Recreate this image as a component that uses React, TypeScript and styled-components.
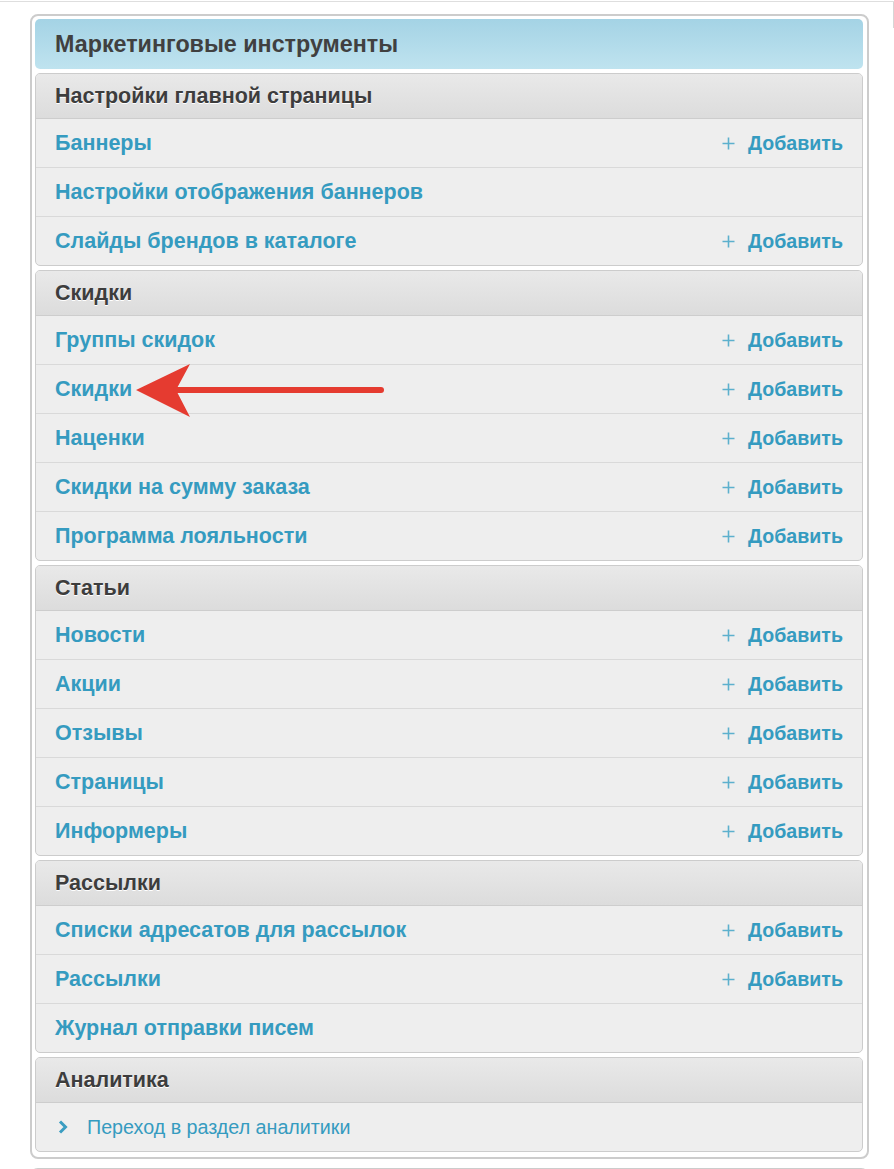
import React from "react";
import styled, { createGlobalStyle } from "styled-components";

const Global = createGlobalStyle`
  html, body { margin: 0; padding: 0; background: #ffffff; }
  body { font-family: "Liberation Sans", Arial, sans-serif; }
  * { box-sizing: border-box; }
`;

const Page = styled.div`
  position: relative;
  width: 894px;
  min-height: 1169px;
  padding-top: 12px;
  border-top: 1px solid #dedede;
  margin-top: 1px;
  overflow: hidden;
`;

const EdgeMark = styled.div`
  position: absolute;
  top: 0;
  right: 0;
  width: 1px;
  height: 26px;
  background: #d6d6d6;
`;

const Outer = styled.div`
  margin-left: 30px;
  width: 839px;
  border: 2px solid #cccccc;
  border-radius: 8px;
  padding: 3px 4px 5px 3px;
  background: #ffffff;
`;

const Title = styled.div`
  height: 50px;
  border-radius: 5px;
  background: linear-gradient(#a4d3e5, #bfe3ef);
  display: flex;
  align-items: center;
  padding-left: 20px;
  font-size: 23.3px;
  font-weight: bold;
  color: #404040;
`;

const Block = styled.div`
  position: relative;
  margin-top: 4px;
  border: 1px solid #cccccc;
  border-radius: 5px;
  background: #eeeeee;
  overflow: hidden;
`;

const BlockHeader = styled.div`
  height: 45px;
  display: flex;
  align-items: center;
  padding-left: 19px;
  background: linear-gradient(#e9e9e9, #dcdcdc);
  border-bottom: 1px solid #cdcdcd;
  font-size: 21.5px;
  font-weight: bold;
  color: #3d3d3d;
  text-shadow: 0 1px 0 #ffffff;
`;

const Row = styled.div<{ $first?: boolean }>`
  height: ${(p) => (p.$first ? "48px" : "49px")};
  display: flex;
  align-items: center;
  justify-content: space-between;
  padding: 0 19px;
  border-top: ${(p) => (p.$first ? "none" : "1px solid #d9d9d9")};
`;

const ItemLink = styled.a`
  font-size: 21.5px;
  font-weight: bold;
  color: #359bc0;
  text-decoration: none;
`;

const AddLink = styled.a`
  display: flex;
  align-items: center;
  gap: 13px;
  font-size: 19.6px;
  font-weight: bold;
  color: #359bc0;
  text-decoration: none;
`;

const PlainRow = styled.div`
  height: 48px;
  display: flex;
  align-items: center;
  padding-left: 22px;
  gap: 19px;
  font-size: 19.7px;
  color: #359bc0;
`;

const ArrowOverlay = styled.svg`
  position: absolute;
  left: 100px;
  top: 93px;
  pointer-events: none;
`;

const NextBox = styled.div`
  margin: 9px 0 0 30px;
  width: 839px;
  height: 20px;
  border: 2px solid #cccccc;
  border-bottom: none;
  border-radius: 8px 8px 0 0;
`;

const Plus = () => (
  <svg width="13" height="13" viewBox="0 0 13 13">
    <path d="M6.5 0.5V12.5M0.5 6.5H12.5" stroke="#5cb0cd" strokeWidth="1.6" />
  </svg>
);

const Chevron = () => (
  <svg width="10" height="14" viewBox="0 0 10 14">
    <path d="M2 1.5L7.5 7L2 12.5" stroke="#3a9dc1" strokeWidth="3" fill="none" />
  </svg>
);

type Item = { label: string; add?: boolean };
type Section = { title: string; items: Item[] };

const sections: Section[] = [
  {
    title: "Настройки главной страницы",
    items: [
      { label: "Баннеры", add: true },
      { label: "Настройки отображения баннеров" },
      { label: "Слайды брендов в каталоге", add: true },
    ],
  },
  {
    title: "Скидки",
    items: [
      { label: "Группы скидок", add: true },
      { label: "Скидки", add: true },
      { label: "Наценки", add: true },
      { label: "Скидки на сумму заказа", add: true },
      { label: "Программа лояльности", add: true },
    ],
  },
  {
    title: "Статьи",
    items: [
      { label: "Новости", add: true },
      { label: "Акции", add: true },
      { label: "Отзывы", add: true },
      { label: "Страницы", add: true },
      { label: "Информеры", add: true },
    ],
  },
  {
    title: "Рассылки",
    items: [
      { label: "Списки адресатов для рассылок", add: true },
      { label: "Рассылки", add: true },
      { label: "Журнал отправки писем" },
    ],
  },
];

export default function App() {
  return (
    <>
      <Global />
      <Page>
        <EdgeMark />
        <Outer>
          <Title>Маркетинговые инструменты</Title>
          {sections.map((s, si) => (
            <Block key={s.title}>
              <BlockHeader>{s.title}</BlockHeader>
              {s.items.map((it, i) => (
                <Row key={it.label} $first={i === 0}>
                  <ItemLink>{it.label}</ItemLink>
                  {it.add && (
                    <AddLink>
                      <Plus />
                      Добавить
                    </AddLink>
                  )}
                </Row>
              ))}
              {si === 1 && (
                <ArrowOverlay width="290" height="60" viewBox="0 0 290 60">
                  <path d="M0 26 L54 0 L40 26 L54 53 Z" fill="#e53b30" />
                  <path d="M40 26 H245" stroke="#e53b30" strokeWidth="6" strokeLinecap="round" />
                </ArrowOverlay>
              )}
            </Block>
          ))}
          <Block>
            <BlockHeader>Аналитика</BlockHeader>
            <PlainRow>
              <Chevron />
              Переход в раздел аналитики
            </PlainRow>
          </Block>
        </Outer>
        <NextBox />
      </Page>
    </>
  );
}
